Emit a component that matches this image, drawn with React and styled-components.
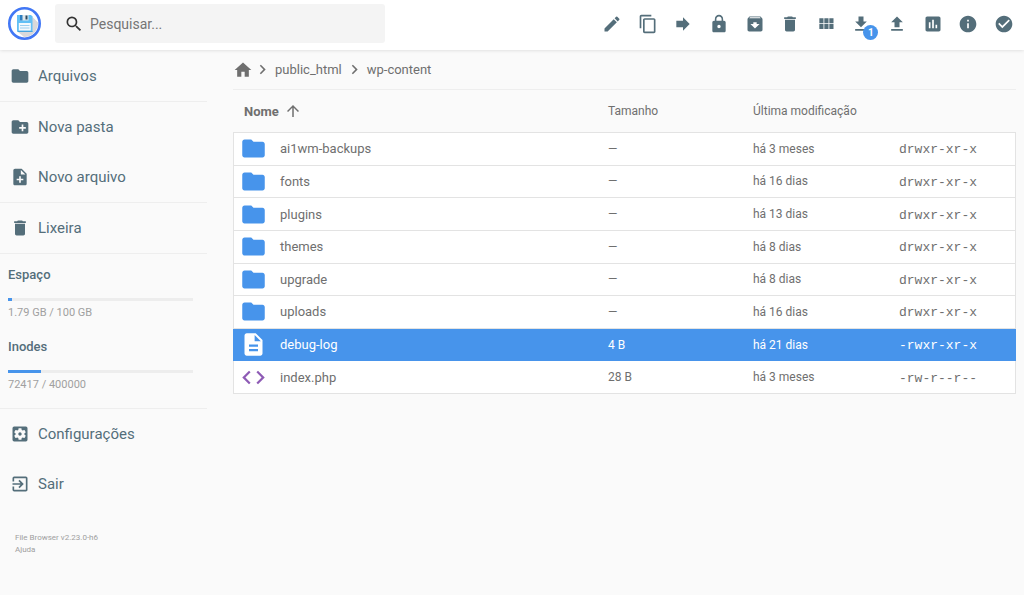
import React from "react";
import styled, { createGlobalStyle, css } from "styled-components";
import {
  MdFolder,
  MdCreateNewFolder,
  MdNoteAdd,
  MdDelete,
  MdSettingsApplications,
  MdExitToApp,
  MdSearch,
  MdEdit,
  MdContentCopy,
  MdForward,
  MdLock,
  MdArchive,
  MdFileDownload,
  MdFileUpload,
  MdInsertChart,
  MdInfo,
  MdCheckCircle,
  MdHome,
  MdKeyboardArrowRight,
  MdArrowUpward,
  MdDescription,
  MdCode,
} from "react-icons/md";

const blue = "#4794eb";
const slate = "#546e7a";
const gray = "#6f6f6f";
const line = "#eeeeee";

const GlobalStyle = createGlobalStyle`
  * { box-sizing: border-box; }
  body {
    margin: 0;
    background: #fafafa;
    color: ${gray};
    font-family: Roboto, "Liberation Sans", sans-serif;
    font-size: 13px;
  }
  button, input { font: inherit; color: inherit; }
  a { color: inherit; text-decoration: none; }
  svg { display: block; flex: none; }
`;

const Header = styled.header`
  display: flex;
  align-items: center;
  justify-content: space-between;
  height: 50px;
  padding: 0 10px 3px 8px;
  background: #fff;
  box-shadow: 0 0 4px rgba(0, 0, 0, 0.16);
`;

const Brand = styled.div`
  display: flex;
  align-items: center;
  gap: 14px;
  flex: 1;
`;

const SearchBox = styled.label`
  display: flex;
  align-items: center;
  gap: 6px;
  flex: 1;
  max-width: 330px;
  height: 39px;
  padding: 0 9px;
  border-radius: 3px;
  background: #f4f4f4;
  color: #333;
`;

const SearchInput = styled.input`
  flex: 1;
  min-width: 0;
  padding: 0;
  border: 0;
  outline: 0;
  background: transparent;
  font-size: 14px;
  &::placeholder { color: #757575; opacity: 1; }
`;

const Toolbar = styled.div`
  display: flex;
  justify-content: space-between;
  width: 412px;
  color: ${slate};
`;

const IconButton = styled.button`
  position: relative;
  padding: 0;
  border: 0;
  background: none;
  font-size: 20px;
  cursor: pointer;
`;

const Badge = styled.span`
  position: absolute;
  left: 12px;
  top: 11px;
  width: 15px;
  height: 15px;
  border-radius: 50%;
  background: ${blue};
  color: #fff;
  font-size: 10px;
  font-weight: 700;
  line-height: 15px;
  text-align: center;
`;

const Page = styled.div`
  display: flex;
  align-items: flex-start;
`;

const Sidebar = styled.nav`
  flex: none;
  width: 207px;
  padding-top: 1px;
`;

const Section = styled.div`
  border-bottom: ${(p) => (p.$last ? "0" : `1px solid ${line}`)};
`;

const NavButton = styled.button`
  display: flex;
  align-items: center;
  gap: 8px;
  width: 100%;
  height: 50px;
  padding: 0 10px;
  border: 0;
  background: none;
  color: ${slate};
  font-size: 15px;
  cursor: pointer;
  svg { font-size: 20px; }
`;

const Usage = styled.div`
  padding: 10px 14px 16px 8px;
`;

const UsageItem = styled.div`
  display: flex;
  flex-direction: column;
  height: ${(p) => (p.$last ? "56px" : "72px")};
`;

const UsageTitle = styled.h3`
  margin: 0;
  color: ${slate};
  font-size: 13px;
  font-weight: 500;
  line-height: 22px;
`;

const Track = styled.div`
  flex: none;
  height: 3px;
  margin: 12px 0 5px;
  background: #ededed;
`;

const Fill = styled.div`
  height: 100%;
  background: ${blue};
`;

const UsageText = styled.span`
  color: #a0a0a0;
  font-size: 11px;
  line-height: 13px;
`;

const Credits = styled.footer`
  display: flex;
  flex-direction: column;
  padding: 23px 15px;
  color: #a0a0a0;
  font-size: 8px;
  line-height: 12px;
`;

const Main = styled.main`
  flex: 1;
  min-width: 0;
  padding: 0 8px 0 26px;
`;

const Breadcrumbs = styled.nav`
  display: flex;
  align-items: center;
  height: 40px;
  border-bottom: 1px solid ${line};
  a { padding: 0 3px; }
  a:first-child { padding: 0; }
`;

const Listing = styled.table`
  width: 100%;
  height: 304px;
  table-layout: fixed;
  border-collapse: separate;
  border-spacing: 0;
`;

const Col = styled.col`
  width: ${(p) => p.$width};
`;

const Heading = styled.th`
  height: 43px;
  padding: 0 0 0 ${(p) => (p.$name ? "11px" : "1px")};
  border-bottom: 1px solid #e3e3e3;
  font-size: ${(p) => (p.$name ? "13px" : "12px")};
  font-weight: ${(p) => (p.$name ? 700 : 400)};
  text-align: left;
`;

const SortButton = styled.button`
  display: flex;
  align-items: center;
  gap: 5px;
  padding: 0;
  border: 0;
  background: none;
  cursor: pointer;
  svg { font-size: 18px; }
`;

const Cell = styled.td`
  height: 32px;
  padding: 0 0 0 1px;
  border-bottom: 1px solid #e3e3e3;
  font-size: 12px;
`;

const Row = styled.tr`
  background: #fff;
  ${Cell}:first-child { border-left: 1px solid #e3e3e3; }
  ${Cell}:last-child { border-right: 1px solid #e3e3e3; }
  ${(p) =>
    p.$selected &&
    css`
      background: ${blue};
      color: #fff;
      ${Cell}, ${Cell}:first-child, ${Cell}:last-child { border-color: ${blue}; }
    `}
`;

const FileName = styled.div`
  display: flex;
  align-items: center;
  gap: 13px;
  padding-left: 5px;
  font-size: 13px;
  svg {
    font-size: 27px;
    color: ${(p) => p.$color};
  }
`;

const Mode = styled.code`
  display: block;
  padding-top: 2px;
  font-family: "Liberation Mono", monospace;
  font-size: 13px;
`;

const Logo = () => (
  <svg width="33" height="33" viewBox="0 0 33 33" aria-hidden="true">
    <circle cx="16.500" cy="16.500" r="15.200" fill="#fff" stroke="#4177f5" strokeWidth="2.600" />
    <path d="M24.500 10l5.500 5.500a13.800 13.800 0 0 1-14 14.500L10 25z" fill="#d8d9da" />
    <path d="M9 8h14l1.500 1.500V25H10l-1-1z" fill="#62c0f5" />
    <path d="M12 8h8.500v5.500H12z" fill="#dfe7ec" />
    <path d="M12 8h2.500v5.500H12z" fill="#2f7fc0" />
    <path d="M17.500 8.500h2v4h-2z" fill="#2c4a62" />
    <path d="M10.800 16h12v7.500h-12z" fill="#f4fafd" />
    <path d="M12 18.500h9.500M12 21h9.500" stroke="#9ccff0" />
    <path d="M9.500 24.200h15v.8h-15z" fill="#3f9fd8" />
  </svg>
);

const GridIcon = () => (
  <svg width="20" height="20" viewBox="0 0 24 24" fill="currentColor">
    <path d="M4 11h5V5H4v6zm0 7h5v-6H4v6zm6 0h5v-6h-5v6zm6 0h5v-6h-5v6zm-6-7h5V5h-5v6zm6-6v6h5V5h-5z" />
  </svg>
);

const actions = [
  ["Renomear", MdEdit],
  ["Copiar", MdContentCopy],
  ["Mover", MdForward],
  ["Permissões", MdLock],
  ["Compactar", MdArchive],
  ["Apagar", MdDelete],
  ["Alterar visualização", GridIcon],
  ["Baixar", MdFileDownload, 1],
  ["Enviar", MdFileUpload],
  ["Uso do disco", MdInsertChart],
  ["Informações", MdInfo],
  ["Selecionar", MdCheckCircle],
];

const sections = [
  [["Arquivos", MdFolder]],
  [
    ["Nova pasta", MdCreateNewFolder],
    ["Novo arquivo", MdNoteAdd],
  ],
  [["Lixeira", MdDelete]],
];

const account = [
  ["Configurações", MdSettingsApplications],
  ["Sair", MdExitToApp],
];

const usage = [
  { title: "Espaço", text: "1.79 GB / 100 GB", percent: 2 },
  { title: "Inodes", text: "72417 / 400000", percent: 18 },
];

const kinds = {
  folder: [MdFolder, blue],
  text: [MdDescription, "#fff"],
  code: [MdCode, "#8e5bb5"],
};

const files = [
  ["ai1wm-backups", "folder", "—", "há 3 meses", "drwxr-xr-x"],
  ["fonts", "folder", "—", "há 16 dias", "drwxr-xr-x"],
  ["plugins", "folder", "—", "há 13 dias", "drwxr-xr-x"],
  ["themes", "folder", "—", "há 8 dias", "drwxr-xr-x"],
  ["upgrade", "folder", "—", "há 8 dias", "drwxr-xr-x"],
  ["uploads", "folder", "—", "há 16 dias", "drwxr-xr-x"],
  ["debug-log", "text", "4 B", "há 21 dias", "-rwxr-xr-x"],
  ["index.php", "code", "28 B", "há 3 meses", "-rw-r--r--"],
];

const NavItems = ({ items }) =>
  items.map(([label, Icon]) => (
    <NavButton key={label} type="button">
      <Icon />
      {label}
    </NavButton>
  ));

const FileRow = ({ file: [name, kind, size, modified, mode], selected }) => {
  const [Icon, color] = kinds[kind];
  return (
    <Row $selected={selected}>
      <Cell>
        <FileName $color={color}>
          <Icon />
          {name}
        </FileName>
      </Cell>
      <Cell>{size}</Cell>
      <Cell>{modified}</Cell>
      <Cell>
        <Mode>{mode}</Mode>
      </Cell>
    </Row>
  );
};

export default function App() {
  return (
    <>
      <GlobalStyle />
      <Header>
        <Brand>
          <Logo />
          <SearchBox>
            <MdSearch size={20} />
            <SearchInput type="text" placeholder="Pesquisar..." aria-label="Pesquisar" />
          </SearchBox>
        </Brand>
        <Toolbar>
          {actions.map(([label, Icon, count]) => (
            <IconButton key={label} type="button" aria-label={label}>
              <Icon />
              {count && <Badge>{count}</Badge>}
            </IconButton>
          ))}
        </Toolbar>
      </Header>
      <Page>
        <Sidebar>
          {sections.map((items) => (
            <Section key={items[0][0]}>
              <NavItems items={items} />
            </Section>
          ))}
          <Section>
            <Usage>
              {usage.map(({ title, text, percent }, i) => (
                <UsageItem key={title} $last={i === usage.length - 1}>
                  <UsageTitle>{title}</UsageTitle>
                  <Track>
                    <Fill style={{ width: `${percent}%` }} />
                  </Track>
                  <UsageText>{text}</UsageText>
                </UsageItem>
              ))}
            </Usage>
          </Section>
          <Section $last>
            <NavItems items={account} />
          </Section>
          <Credits>
            <a href="#sobre">File Browser v2.23.0-h6</a>
            <a href="#ajuda">Ajuda</a>
          </Credits>
        </Sidebar>
        <Main>
          <Breadcrumbs>
            <a href="#inicio" aria-label="Início">
              <MdHome size={20} />
            </a>
            <MdKeyboardArrowRight size={19} />
            <a href="#public_html">public_html</a>
            <MdKeyboardArrowRight size={19} />
            <a href="#wp-content">wp-content</a>
          </Breadcrumbs>
          <Listing>
            <colgroup>
              <Col $width="auto" />
              <Col $width="145px" />
              <Col $width="146px" />
              <Col $width="118px" />
            </colgroup>
            <thead>
              <tr>
                <Heading $name>
                  <SortButton type="button">
                    Nome
                    <MdArrowUpward />
                  </SortButton>
                </Heading>
                <Heading>Tamanho</Heading>
                <Heading>Última modificação</Heading>
                <Heading aria-label="Permissões" />
              </tr>
            </thead>
            <tbody>
              {files.map((file) => (
                <FileRow key={file[0]} file={file} selected={file[0] === "debug-log"} />
              ))}
            </tbody>
          </Listing>
        </Main>
      </Page>
    </>
  );
}
